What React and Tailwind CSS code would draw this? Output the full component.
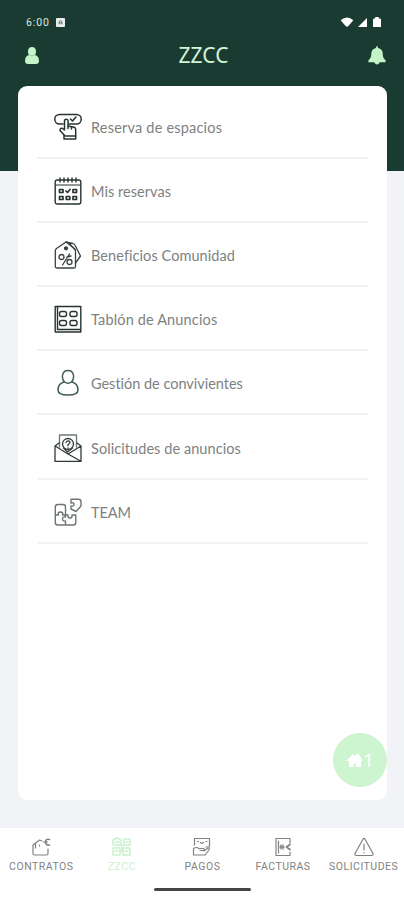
import React, { useState } from "react";

const iconProps = {
    fill: "none",
    stroke: "currentColor",
    strokeLinecap: "round",
    strokeLinejoin: "round",
};

const ReserveIcon = () => (
    <svg viewBox="0 0 28 28" className="w-7 h-7 text-[#26332e]" strokeWidth="1.5" {...iconProps}>
        <path d="M9 11H5.500a4.700 4.700 0 0 1 0-9.500h17a4.700 4.700 0 0 1 0 9.500H15" />
        <path d="M16.500 6l2 2 3.500-4" />
        <path d="M10.500 16V8a1.800 1.800 0 0 1 3.600 0v5l6 1.200q1.600.4 1.600 2.200V23H11l-5-5.500q0-3 2.500-2l2 1.500" />
        <path d="M10 22.500V26h11.700v-3M14 13v2.500M17.500 14v2" />
    </svg>
);

const CalendarIcon = () => (
    <svg viewBox="0 0 28 28" className="w-7 h-7 text-[#26332e]" strokeWidth="1.4" {...iconProps}>
        <rect x="1.2" y="3" width="25.6" height="24" rx="2" />
        <path d="M1.500 8h25" strokeWidth="1" />
        <path d="M6 1v4M10 1v4M14 1v4M18 1v4M22 1v4" />
        <path d="M5.500 12.500h3.500v3H5.500zM19 12.500h3.500v3H19zM5.500 19.500h3.500v3H5.500zM12.300 19.500h3.500v3h-3.500zM19 19.500h3.500v3H19zM12 14l1.500 1.500 2.500-3" strokeWidth="1.7" />
    </svg>
);

const TagIcon = () => (
    <svg viewBox="0 0 28 28" className="w-7 h-7 text-[#38433f]" strokeWidth="1.3" {...iconProps}>
        <path d="M12 1L2.500 7.500Q1.300 8.500 1.300 10v15.500q0 1.500 1.500 1.500H20q1.500 0 1.500-1.500V10q0-1.500-1.200-2.500z" />
        <path d="M12 1l7 1.500q1.500.5 2.200 2l5.300 10.500-5 7M15 1.800l6 7" />
        <circle cx="12" cy="7.3" r="1.5" fill="currentColor" />
        <circle cx="7.5" cy="16" r="2.5" />
        <circle cx="15.5" cy="21" r="2.5" />
        <path d="M15.500 13l-7 11M13 16l4-1" />
    </svg>
);

const BoardIcon = () => (
    <svg viewBox="0 0 28 28" className="w-7 h-7 text-[#26332e]" strokeWidth="1.4" {...iconProps}>
        <path d="M1.200 1.500h25.600v25.500H1.200zM3.500 2v22.500h23" />
        <rect x="5.5" y="6.5" width="7" height="5" rx="2" />
        <rect x="16" y="6.5" width="7" height="5" rx="2" />
        <rect x="5.5" y="15.5" width="7" height="5" rx="2" />
        <rect x="16" y="15.5" width="7" height="5" rx="2" />
    </svg>
);

const PersonIcon = () => (
    <svg viewBox="0 0 28 28" className="w-7 h-7 text-[#3f5d52]" strokeWidth="1.5" {...iconProps}>
        <path d="M10.500 13C6.500 8 8.500 1.500 14 1.500s7.500 6.500 3.500 11.500q-3.500 2.500-7 0z" />
        <path d="M10 13c-4 1-6 4-6 8 0 3.500 3 5 10 5s10-1.500 10-5c0-4-2-7-6-8" />
    </svg>
);

const EnvelopeIcon = () => (
    <svg viewBox="0 0 28 28" className="w-7 h-7 text-[#303a36]" strokeWidth="1.3" {...iconProps}>
        <path d="M5.500 13V1h17v12" stroke="#6f7773" />
        <path d="M5 9l-4 3v15.500h26V12l-4-3M1.200 12l12.800 8 13-8M14 20l12.500 7" />
        <circle cx="14" cy="10" r="5.5" />
        <path d="M12 8.500q2-3 4-.5 0 1.700-2 2.700v1M14 14v.2M9.500 14l4 4 5-4" />
    </svg>
);

const PuzzleIcon = () => (
    <svg viewBox="0 0 28 28" className="w-7 h-7 text-[#6c7571]" strokeWidth="1.4" {...iconProps}>
        <path d="M1.300 17V9q0-2.500 2.500-2.500H9q2.500 0 2.500 2.500v8H8.500q1-3-2-3t-2 3z" />
        <path d="M1.300 17v7.500q0 2.500 2.500 2.500h15.500q2.500 0 2.500-2.500V17H18q.5 3-2 3t-2-3h-2.500v2q-3-.5-3 2t3 2v4" />
        <path d="M17 1.300h7.500q2.500 0 2.500 2.500V8l-5 5.500-5-2.500V8q3 .5 3-1.700T17 5z" />
    </svg>
);

const items = [
    { label: "Reserva de espacios", icon: ReserveIcon, tracking: "tracking-[0.2px]" },
    { label: "Mis reservas", icon: CalendarIcon, tracking: "tracking-[0.05px]" },
    { label: "Beneficios Comunidad", icon: TagIcon, tracking: "tracking-[0.07px]" },
    { label: "Tablón de Anuncios", icon: BoardIcon, tracking: "tracking-[0.15px]" },
    { label: "Gestión de convivientes", icon: PersonIcon, tracking: "tracking-[-0.02px]" },
    { label: "Solicitudes de anuncios", icon: EnvelopeIcon, tracking: "tracking-[0.07px]" },
    { label: "TEAM", icon: PuzzleIcon, tracking: "tracking-[-0.1px]" },
];

const ContractIcon = () => (
    <svg viewBox="0 0 20 20" className="w-5 h-5" strokeWidth="1.2" {...iconProps}>
        <path d="M11 4L8.500 3 2 8v8.500q0 1.500 1.500 1.500h12q1.500 0 1.500-1.500V12M4.500 7v4" />
        <path d="M8.500 8v1" />
        <path d="M18.500 2.500q-4-1-4 2.500t4 3M13 5h3" strokeWidth="1.6" />
    </svg>
);

const PaymentIcon = () => (
    <svg viewBox="0 0 20 20" className="w-5 h-5" strokeWidth="1.2" {...iconProps}>
        <path d="M2.500 8V1.500h15V10H14M5.500 4.500h1M14 4.500h1M8.500 5.500l1.500 1 1.500-1" />
        <path d="M1.500 18v-6.500q3-2 5.500 0h4q2 0 1 2H8M12 14l4-3q2 0 1 2l-4 5H1.500" />
    </svg>
);

const InvoiceIcon = () => (
    <svg viewBox="0 0 20 20" className="w-5 h-5" strokeWidth="1.2" {...iconProps}>
        <path d="M17 6V1.500H3v17h14V15M5.500 4v12" />
        <path d="M8 8v4M10 8v4M7 10h4" strokeWidth="1.3" />
        <path d="M17 7.500L13.500 10l3.500 2.500" strokeWidth="1.8" />
    </svg>
);

const WarningIcon = () => (
    <svg viewBox="0 0 20 20" className="w-5 h-5" strokeWidth="1.2" {...iconProps}>
        <path d="M9 2.200q1-1.500 2 0l8 14.300q.5 2-1.200 2H2.200q-1.700 0-1.200-2zM10 7v6M10 15.500v.3" />
    </svg>
);

const CommunityIcon = () => (
    <svg viewBox="0 0 20 20" className="w-5 h-5" strokeWidth="1.5" {...iconProps}>
        <path d="M1 8V3l4-2 4 2v5zM12 2h6v6h-6zM1 11h7v7H1zM11 11h7v7h-7zM3 5h4M3 14h3M13 14h3M14 5h2M10 8v7" />
    </svg>
);

const tabs = [
    { label: "CONTRATOS", icon: ContractIcon },
    { label: "ZZCC", icon: CommunityIcon },
    { label: "PAGOS", icon: PaymentIcon },
    { label: "FACTURAS", icon: InvoiceIcon },
    { label: "SOLICITUDES", icon: WarningIcon },
];

const App = () => {
    const [active, setActive] = useState("ZZCC");

    return (
        <div className="w-full h-screen flex flex-col bg-[#f1f3f6] overflow-hidden font-['Lato',sans-serif]">
            <header className="h-[171px] shrink-0 bg-[#1a3b31]">
                <div className="h-8 pt-[14px] pl-[26px] pr-[23px] flex justify-between text-white">
                    <div className="h-4 flex items-center gap-1.5">
                        <span className="w-6 mt-px text-[10.5px] tracking-[0.9px] leading-4 text-[#dfe7e3] font-['Roboto',sans-serif]">6:00</span>
                        <svg viewBox="0 0 10 10" className="w-[9px] h-[9px]">
                            <rect width="10" height="10" rx="1" fill="#e8eeeb" />
                            <path d="M3.500 7V4L5 3l1.500 1v3M3.500 5.500h3" fill="none" stroke="#53675f" />
                        </svg>
                    </div>
                    <div className="h-4 flex items-center gap-1">
                        <svg viewBox="0 0 14 11" className="w-[14px] h-[10px]" fill="currentColor">
                            <path d="M0 3.500Q7-2.500 14 3.500L8.500 10q-1.500 1.300-3 0z" />
                        </svg>
                        <svg viewBox="0 0 9 9" className="w-[9px] h-[9px]" fill="currentColor">
                            <path d="M9 0v9H0z" />
                        </svg>
                        <svg viewBox="0 0 9 11" className="w-2 h-[10px] ml-0.5" fill="currentColor">
                            <path d="M2.500 0h4v1.500h1q1.500 0 1.500 1.500v8H0V3q0-1.500 1.500-1.500h1z" />
                        </svg>
                    </div>
                </div>
                <div className="h-[46px] pl-[25px] pr-[18px] flex items-center justify-between text-[#c5f4c9]">
                    <svg viewBox="0 0 14 17" className="w-[14px] h-[17px]" fill="currentColor">
                        <path d="M7 0q4 0 4 4.500Q11 7 10 8q4 1 4 6 0 3-3 3H3q-3 0-3-3 0-5 4-6-1-1-1-3.500Q3 0 7 0z" />
                        <path d="M4 8q3 2 6 0" fill="none" stroke="#8fc39c" strokeWidth=".7" />
                    </svg>
                    <h1 className="text-[21px] leading-6 text-[#d3f5d5] font-['Noto_Sans',sans-serif]">ZZCC</h1>
                    <svg viewBox="0 0 18 20" className="w-[18px] h-[19px]" fill="currentColor">
                        <path d="M8 2q0-2 1-2t1 2q5 1 5 6 0 5 3 7v2h-6q-3 5-6 0H0v-2q3-2 3-7 0-5 5-6z" />
                    </svg>
                </div>
            </header>

            <main className="relative w-[369px] h-[714px] shrink-0 mt-[-85px] ml-[18px] px-[19px] pt-[9px] bg-white rounded-[9px]">
                {items.map(({ label, icon: Icon, tracking }) => (
                    <div key={label} className="h-[64.1px] pt-0.5 pl-[17px] flex items-center gap-[9px] border-b-2 border-[#f1f2f2]">
                        <Icon />
                        <span className={`mt-0.5 text-[14.5px] leading-5 text-[#7d817f] whitespace-nowrap ${tracking}`}>{label}</span>
                    </div>
                ))}
                <button className="absolute right-0 bottom-[13px] w-[54px] h-[54px] rounded-full bg-[#cdf5cf] text-white flex justify-center items-center">
                    <svg viewBox="0 0 17 15" className="w-[17px] h-[15px]" fill="currentColor">
                        <path d="M0 8l7-7 2 2 3-3 5 8h-2v6h-5l-1-5-2 5H3V8z" />
                    </svg>
                    <span className="text-[19px] leading-5 font-['Open_Sans',sans-serif]">1</span>
                </button>
            </main>

            <nav className="h-[72px] shrink-0 mt-7 pt-[9px] bg-white flex flex-col items-center">
                <div className="w-full pl-px grid grid-cols-5">
                    {tabs.map(({ label, icon: Icon }) => (
                        <button
                            key={label}
                            onClick={() => setActive(label)}
                            className={`flex flex-col items-center ${active === label ? "text-[#c9f2cc]" : "text-[#808281]"}`}
                        >
                            <Icon />
                            <span className="mt-[3px] text-[10.5px] leading-[14px] tracking-[0.5px] font-['Roboto',sans-serif]">{label}</span>
                        </button>
                    ))}
                </div>
                <div className="w-[97px] h-[3px] mt-[14px] rounded-full bg-[#464646]"></div>
            </nav>
        </div>
    );
};

export default App;
